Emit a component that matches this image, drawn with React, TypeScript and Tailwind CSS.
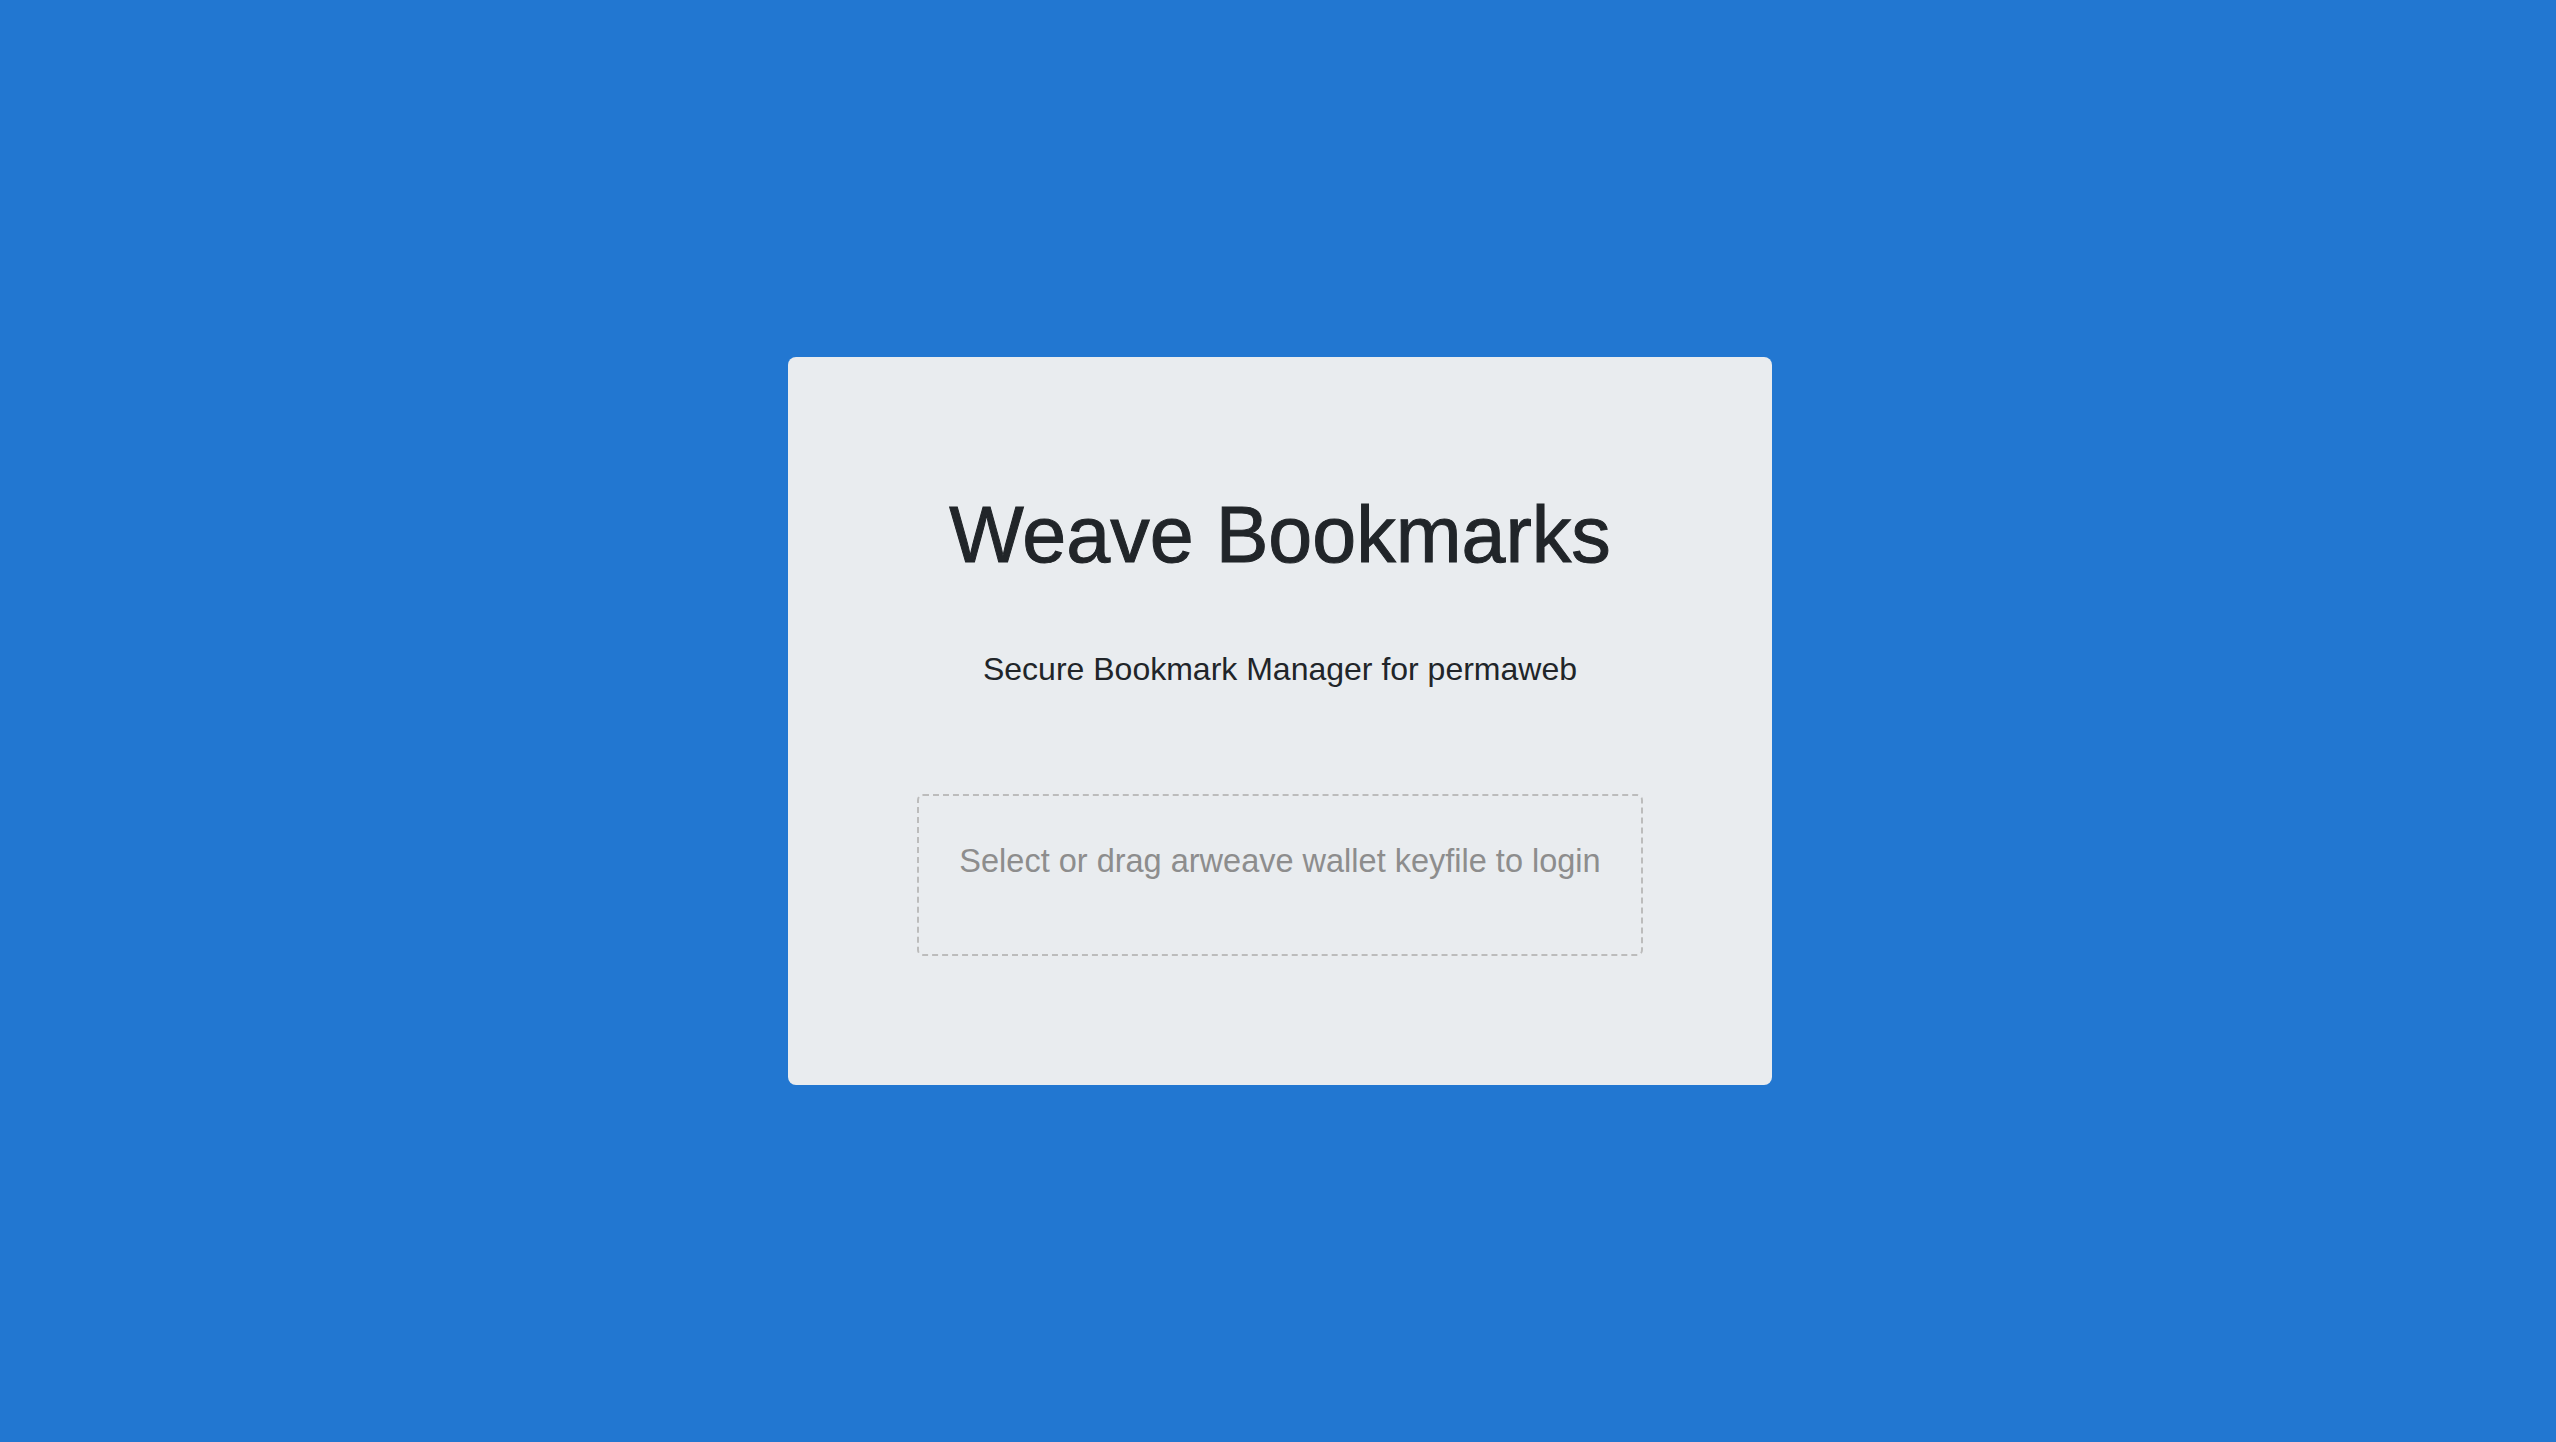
const App = () => {
  return (
    <div className="min-h-screen w-full bg-[#2277d1] flex items-center justify-center pl-1 font-['Liberation_Sans',Arial,sans-serif]">
      <div className="w-[984px] h-[728px] bg-[#e9ecef] rounded-[8px] flex flex-col items-center pt-[138px]">
        <h1 className="text-[79px] leading-none font-normal text-[#212529] whitespace-nowrap [-webkit-text-stroke:1px_#212529]">
          Weave Bookmarks
        </h1>
        <p className="mt-[79px] text-[32px] leading-none text-[#212529] whitespace-nowrap">
          Secure Bookmark Manager for permaweb
        </p>
        <label className="mt-[109px] w-[726px] h-[162px] border-2 border-dashed border-[#bcbcbc] rounded-[6px] flex justify-center pt-[49px] cursor-pointer">
          <span className="text-[32.5px] leading-none text-[#8d8d8d] whitespace-nowrap">
            Select or drag arweave wallet keyfile to login
          </span>
          <input type="file" className="hidden" />
        </label>
      </div>
    </div>
  );
};

export default App;
